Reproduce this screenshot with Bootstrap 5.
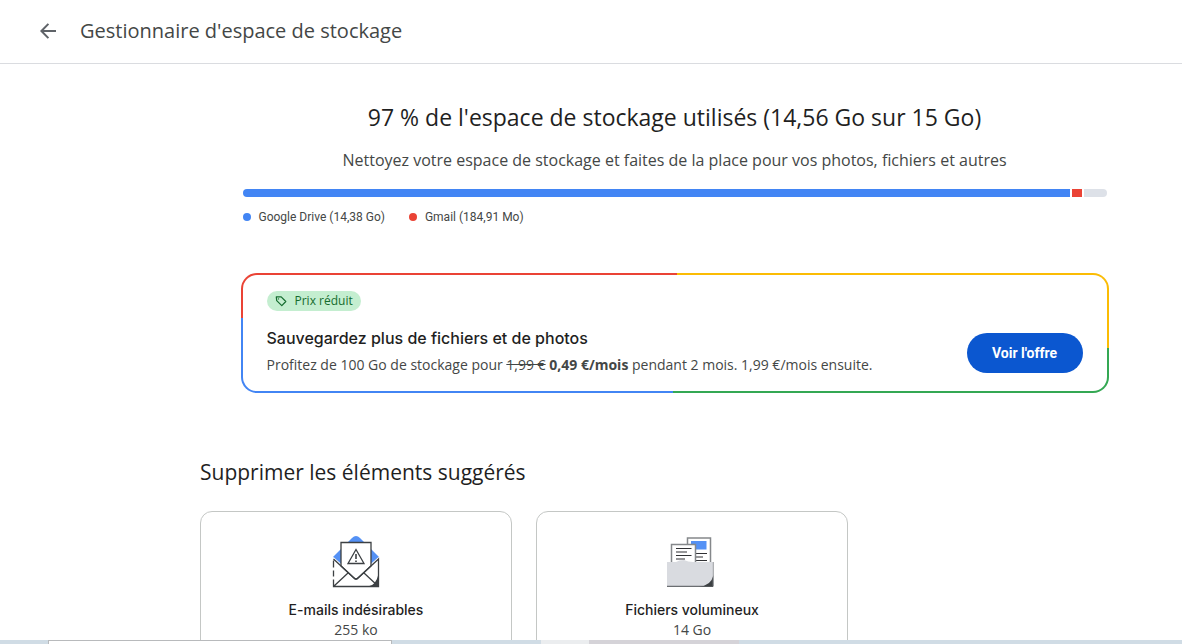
<!DOCTYPE html>
<html lang="fr">
<head>
<meta charset="utf-8">
<meta name="viewport" content="width=device-width, initial-scale=1">
<title>Gestionnaire d'espace de stockage</title>
<link href="https://cdn.jsdelivr.net/npm/bootstrap@5.3.0/dist/css/bootstrap.min.css" rel="stylesheet">
<style>
  body { font-family: "Open Sans", sans-serif; color: #1f1f1f; background: #fff; font-size: 14px; line-height: 20px; }
  .topbar { height: 64px; padding: 0 0 2px 40px; border-bottom: 1px solid #dadce0; color: #444746; }
  .topbar h1 { font-size: 20px; line-height: 28px; font-weight: 400; }
  .back-link { width: 16px; height: 16px; margin-right: 24px; color: #5f6368; }
  .page-area { padding: 37px 33px 0 200px; }
  .usage { width: 100%; max-width: 868px; }
  .headline { font-size: 23px; line-height: 32px; font-weight: 400; }
  .subline { font-size: 16px; line-height: 24px; color: #444746; margin-top: 15px; }
  .meter { gap: 2px; height: 8px; margin: 17px 2px 0; border-radius: 4px; background: #fff; }
  .drive { background: #4285f4; }
  .gmail { background: #ea4335; }
  .free { background: #dde1e8; }
  .legend { font-family: Roboto, sans-serif; font-size: 12px; line-height: 16px; color: #444746; margin: 12px 2px 0; }
  .dot { width: 8px; height: 8px; }
  .offer { margin-top: 48px; padding: 16px 24px; border: 2px solid transparent; border-radius: 16px;
    background: linear-gradient(#fff, #fff) padding-box, conic-gradient(from 2deg, #fbbc04 90deg, #34a853 0 180deg, #4285f4 0 270deg, #ea4335 0) border-box; }
  .price-tag { background: #c4eed0; color: #146c2e; font-size: 12px; line-height: 20px; padding: 0 8px; gap: 8px; }
  .offer h3, .suggestion h3 { font-family: Inter, sans-serif; font-weight: 500; }
  .offer h3 { font-size: 16px; line-height: 24px; margin-top: 14px; }
  .offer p { color: #444746; line-height: 20px; margin-top: 5px; }
  .btn-offer { --bs-btn-bg: #0b57d0; --bs-btn-color: #fff; --bs-btn-hover-bg: #0a4fbf; --bs-btn-hover-color: #fff; min-width: 116px; height: 40px; margin-bottom: 2px; padding: 0 20px; font-family: Roboto, sans-serif; font-size: 14px; font-weight: 700; }
  .section-title { font-size: 21px; line-height: 28px; font-weight: 400; margin: 65px 0 25px; }
  .suggestion { flex: 0 0 312px; border: 1px solid #c4c7c5; border-radius: 12px; padding: 20px 16px 24px; }
  .suggestion h3 { font-size: 14px; line-height: 20px; margin-top: 12px; }
  .suggestion p { color: #444746; }
  .desk-strip { height: 4px; background: #d0dce5; }
  .strip-start { width: 48px; }
  .strip-search { width: 344px; background: #fff; border: 1px solid #b8babc; border-bottom: 0; }
  .strip-space { width: 149px; }
  .strip-active { width: 48px; background: #ebedef; }
  .strip-app { width: 150px; background: #d5d3d8; }
</style>
</head>
<body class="vh-100 d-flex flex-column overflow-hidden">
<header class="topbar d-flex align-items-center flex-shrink-0">
  <a href="#" class="back-link d-flex" aria-label="Retour">
    <svg width="16" height="16" viewBox="0 0 16 16" fill="none" stroke="currentColor" stroke-width="2"><path d="M16 8H1.600M8.400.9 1.400 8l7 7.100"/></svg>
  </a>
  <h1 class="mb-0">Gestionnaire d'espace de stockage</h1>
</header>

<main class="page-area flex-grow-1 overflow-hidden">
  <section class="usage mx-auto">
    <h2 class="headline text-center mb-0">97 % de l'espace de stockage utilisés (14,56 Go sur 15 Go)</h2>
    <p class="subline text-center mb-0">Nettoyez votre espace de stockage et faites de la place pour vos photos, fichiers et autres</p>
    <div class="meter d-flex overflow-hidden">
      <div class="drive flex-shrink-0" style="width:95.83%"></div>
      <div class="gmail flex-shrink-0" style="width:1.16%"></div>
      <div class="free flex-grow-1"></div>
    </div>
    <div class="legend d-flex gap-4">
      <span class="d-flex align-items-center gap-2"><span class="dot drive rounded-circle"></span>Google Drive (14,38 Go)</span>
      <span class="d-flex align-items-center gap-2"><span class="dot gmail rounded-circle"></span>Gmail (184,91 Mo)</span>
    </div>
    <div class="offer d-flex justify-content-between align-items-end">
      <div>
        <span class="price-tag d-inline-flex align-items-center rounded-pill">
          <svg width="12" height="12" viewBox="0 0 12 12" fill="none" stroke="currentColor" stroke-width="1.200"><path d="M1.300 1.900h4.900l4.600 4.600-4 4.200-5.100-5.100z" stroke-linejoin="round"/><circle cx="3.500" cy="3.900" r=".7" fill="currentColor" stroke="none"/></svg>
          Prix réduit</span>
        <h3 class="mb-0">Sauvegardez plus de fichiers et de photos</h3>
        <p class="mb-0">Profitez de 100 Go de stockage pour <s>1,99 €</s> <strong>0,49 €/mois</strong> pendant 2 mois. 1,99 €/mois ensuite.</p>
      </div>
      <button type="button" class="btn btn-offer rounded-pill">Voir l'offre</button>
    </div>
  </section>

  <section>
    <h2 class="section-title">Supprimer les éléments suggérés</h2>
    <div class="d-flex gap-4">
      <article class="suggestion text-center">
        <svg width="56" height="56" viewBox="0 0 56 56" fill="none" stroke="#3c4043" stroke-width="1.300">
          <path d="M5 25 24 6q4-4 8 0l19 19-10 9H15z" fill="#5491f5" stroke="none"/>
          <path d="M5.500 25v29.500h45V25L29.500 44q-1.500 1.500-3 0z" fill="#fff" stroke="none"/>
          <path d="M13 34V10.500h30V34L30 46q-2 2-4 0z" fill="#fff"/>
          <path d="M5.500 27 26 46q2 2 4 0l20.500-19v27.500h-45v-7m0-3v-6m0-3v-7M5.500 54.500 20 41m16 0 14.500 13.500"/>
          <path d="M50.500 42v12.500H40q8-1 10.500-12.500z" fill="#3c4043" stroke="none"/>
          <path d="m28 17.500 8 14H20z"/><path d="M28 22v5m0 1.500v1.500" stroke-width="1.600"/>
        </svg>
        <h3 class="mb-0">E-mails indésirables</h3>
        <p class="mb-0">255 ko</p>
      </article>
      <article class="suggestion text-center">
        <svg width="56" height="56" viewBox="0 0 56 56" fill="none">
          <path d="M23.500 6h23v30h-23z" fill="#fff" stroke="#85888b" stroke-width="1.500"/>
          <path d="M27 9h15.500v8.500H27z" fill="#5491f5"/>
          <path d="M31 21.500h12M31 25h8M31 28.500h12" stroke="#303134" stroke-width="1.200"/>
          <path d="M7.500 12.500h24v24h-24z" fill="#fff" stroke="#85888b" stroke-width="1.500"/>
          <path d="M12 16.500h15.500M12 20h11M12 23.500h15.500M12 27h9" stroke="#303134" stroke-width="1.200"/>
          <path d="M3 30h9q3-2 8-2 4 2 9 2h20v24H3z" fill="#d9dbe0"/>
          <path d="M3 54.300h46" stroke="#6b6e72" stroke-width="1.200"/>
          <path d="M49.500 43v11.500H35Q47 54 49.500 43z" fill="#3c4043"/>
          <path d="M49.300 30v24" stroke="#9a9da1"/>
        </svg>
        <h3 class="mb-0">Fichiers volumineux</h3>
        <p class="mb-0">14 Go</p>
      </article>
    </div>
  </section>
</main>

<footer class="desk-strip d-flex flex-shrink-0" aria-hidden="true">
  <div class="strip-start"></div><div class="strip-search"></div><div class="strip-space"></div><div class="strip-active"></div><div class="strip-app"></div>
</footer>
<script src="https://cdn.jsdelivr.net/npm/bootstrap@5.3.0/dist/js/bootstrap.bundle.min.js"></script>
</body>
</html>
